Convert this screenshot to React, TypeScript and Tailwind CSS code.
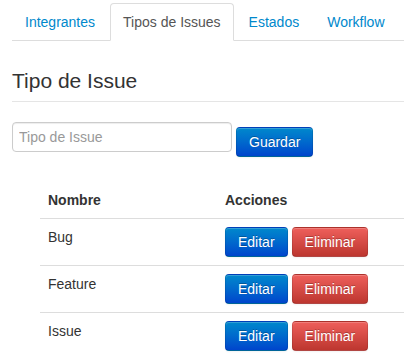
import React, { useState } from 'react';

const tabs = ['Integrantes', 'Tipos de Issues', 'Estados', 'Workflow'];

const issueTypes = [
  { id: 1, nombre: 'Bug' },
  { id: 2, nombre: 'Feature' },
  { id: 3, nombre: 'Issue' },
];

const btnBase =
  'h-[30px] px-[12px] py-[4px] text-[14px] leading-[20px] text-white rounded-[4px] border border-x-black/10 border-t-black/10 border-b-black/25 [text-shadow:0_-1px_0_rgba(0,0,0,0.25)] shadow-[inset_0_1px_0_rgba(255,255,255,0.2),0_1px_2px_rgba(0,0,0,0.05)]';

const PrimaryButton: React.FC<{ children: React.ReactNode }> = ({ children }) => (
  <button type="button" className={`${btnBase} bg-linear-to-b from-[#0088cc] to-[#0044cc]`}>
    {children}
  </button>
);

const DangerButton: React.FC<{ children: React.ReactNode }> = ({ children }) => (
  <button type="button" className={`${btnBase} bg-linear-to-b from-[#ee5f5b] to-[#bd362f]`}>
    {children}
  </button>
);

export default function App() {
  const [activeTab, setActiveTab] = useState('Tipos de Issues');
  const [nuevo, setNuevo] = useState('');

  return (
    <div className="w-[404px] h-[360px] overflow-hidden bg-white pt-[3px] pl-[12px] text-[14px] leading-[20px] text-[#333] font-['Liberation_Sans',Arial,sans-serif]">
      {/* Tabs */}
      <ul className="flex border-b border-[#ddd]">
        {tabs.map((tab) => {
          const active = tab === activeTab;
          return (
            <li key={tab} className="-mb-px">
              <button
                type="button"
                onClick={() => setActiveTab(tab)}
                className={`block mr-[2px] px-[12px] py-[8px] leading-[20px] border rounded-t-[4px] ${
                  active
                    ? 'bg-white text-[#555] border-[#ddd] border-b-transparent'
                    : 'text-[#0088cc] border-transparent'
                }`}
              >
                {tab}
              </button>
            </li>
          );
        })}
      </ul>

      {/* Legend */}
      <div className="mt-[20px] text-[21px] leading-[40px] text-[#333] border-b border-[#e5e5e5]">
        Tipo de Issue
      </div>

      {/* Form */}
      <div className="mt-[20px] flex items-start">
        <input
          type="text"
          value={nuevo}
          onChange={(e) => setNuevo(e.target.value)}
          placeholder="Tipo de Issue"
          className="w-[220px] h-[30px] px-[6px] py-[4px] text-[14px] leading-[20px] text-[#555] border border-[#ccc] rounded-[4px] shadow-[inset_0_1px_1px_rgba(0,0,0,0.075)] placeholder:text-[#999] outline-none"
        />
        <div className="ml-[4px] mt-[5px]">
          <PrimaryButton>Guardar</PrimaryButton>
        </div>
      </div>

      {/* Table */}
      <table className="mt-[25px] ml-[28px] w-[364px] border-collapse text-left">
        <thead>
          <tr>
            <th className="w-[177px] p-[8px] leading-[20px] font-bold align-bottom">Nombre</th>
            <th className="p-[8px] leading-[20px] font-bold align-bottom">Acciones</th>
          </tr>
        </thead>
        <tbody>
          {issueTypes.map((t) => (
            <tr key={t.id}>
              <td className="p-[8px] leading-[20px] align-top border-t border-[#ddd]">{t.nombre}</td>
              <td className="p-[8px] leading-[20px] align-top border-t border-[#ddd]">
                <div className="flex gap-[4px]">
                  <PrimaryButton>Editar</PrimaryButton>
                  <DangerButton>Eliminar</DangerButton>
                </div>
              </td>
            </tr>
          ))}
        </tbody>
      </table>
    </div>
  );
}
